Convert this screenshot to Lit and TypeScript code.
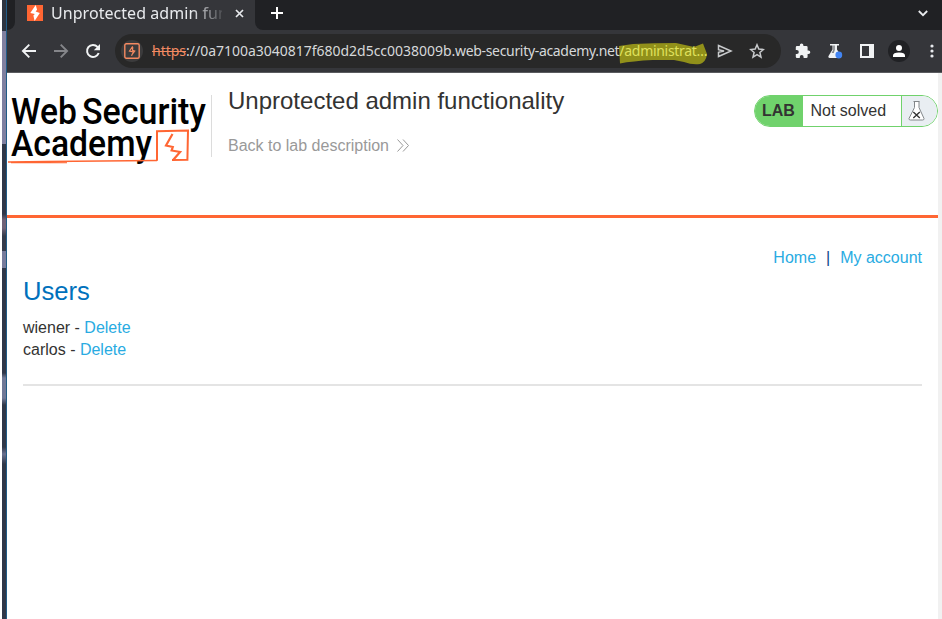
import { LitElement, html, css } from "lit";
import { customElement } from "lit/decorators.js";

@customElement("browser-chrome")
class BrowserChrome extends LitElement {
  static styles = css`
    :host { display: block; font-family: "Noto Sans", sans-serif; color: #e8eaed; }
    svg { display: block; flex: none; }
    .tabs { display: flex; height: 30px; background: #202124; }
    .gap { width: 8px; background: #35363a; }
    .gap i { display: block; height: 30px; background: #202124; border-bottom-right-radius: 8px; }
    .tab { box-sizing: border-box; width: 240px; height: 30px; background: #35363a; display: flex; align-items: flex-start; padding: 5px 0 0 12px; }
    .title { width: 171px; margin: -4px 0 0 8px; overflow: hidden; white-space: nowrap; font-size: 16px; line-height: 24px; letter-spacing: 0.05px;
      -webkit-mask-image: linear-gradient(90deg, #000 140px, transparent 176px); mask-image: linear-gradient(90deg, #000 140px, transparent 176px); }
    .close { margin: 4px 0 0 12.500px; }
    .rest { flex: 1; background: #35363a; }
    .rest div { height: 30px; box-sizing: border-box; background: #202124; border-bottom-left-radius: 8px; display: flex; justify-content: space-between; padding: 7px 14px 0 16px; }
    .caret { margin-top: 3px; }
    .bar { display: flex; align-items: center; box-sizing: border-box; height: 42px; padding-left: 14px; background: #35363a; }
    .nav { display: flex; gap: 16px; width: 94px; }
    .pill { display: flex; flex: none; align-items: center; box-sizing: border-box; width: 666px; height: 34px; border-radius: 17px; background: #282828; padding-left: 6px; }
    .site { flex: none; width: 22px; height: 22px; border-radius: 50%; background: #3b3b3c; display: flex; align-items: center; justify-content: center; }
    .url { position: relative; flex: none; width: 556px; margin-left: 9px; font-size: 14px; line-height: 24px; white-space: nowrap; color: #d6d8da; }
    .url .text { position: relative; display: block; }
    .url s { color: #f28b62; text-decoration-thickness: 1px; }
    .url .id { letter-spacing: -0.02px; }
    .url .host { letter-spacing: -0.32px; }
    .url .path { letter-spacing: -0.3px; color: #dfe05c; }
    .mark { position: absolute; left: 466px; top: 3px; }
    .send { margin-left: 9px; }
    .star { margin-left: 16px; }
    .tools { display: flex; align-items: center; margin-left: 14px; }
    .tools .item { margin-left: 16px; }
    .tools .panel { margin-left: 17px; }
    .avatar { width: 22px; height: 22px; border-radius: 50%; background: #202124; margin-left: 14px; display: flex; align-items: center; justify-content: center; }
    .dots { margin-left: 19.500px; }
    .line { height: 1px; background: #5a5b5f; }
  `;

  render() {
    return html`
      <div class="tabs">
        <div class="gap"><i></i></div>
        <div class="tab">
          <svg width="16" height="16" viewBox="0 0 16 16"><rect width="16" height="16" fill="#ff6633"/><path d="M8.7 0 3.3 8l4.5 1.1-1.4 1.3L7.6 16l5.2-8-4.2-1.6 1.5-1.6z" fill="#fff"/></svg>
          <span class="title">Unprotected admin functionality</span>
          <svg class="close" width="9" height="9" viewBox="0 0 9 9"><path d="M1 1l7 7M8 1 1 8" stroke="#e8eaed" stroke-width="1.7"/></svg>
        </div>
        <div class="rest"><div>
          <svg width="12" height="12" viewBox="0 0 12 12"><path d="M6 0v12M0 6h12" stroke="#fff" stroke-width="2"/></svg>
          <svg class="caret" width="10" height="7" viewBox="0 0 10 7"><path d="M.8 1 5 5.2 9.2 1" fill="none" stroke="#e8eaed" stroke-width="1.8"/></svg>
        </div></div>
      </div>
      <div class="bar">
        <div class="nav">
          <svg width="16" height="16" viewBox="0 0 16 16"><path d="M15 8H2.5M8.3 1.6 1.9 8l6.4 6.4" fill="none" stroke="#f1f3f4" stroke-width="1.9"/></svg>
          <svg width="16" height="16" viewBox="0 0 16 16"><path d="M1 8h12.5M7.700 1.600 14.100 8l-6.400 6.400" fill="none" stroke="#85868a" stroke-width="1.9"/></svg>
          <svg width="16" height="16" viewBox="0 0 16 16"><path d="M13.700 10A6 6 0 1 1 12.500 3.900L14 5.400" fill="none" stroke="#f1f3f4" stroke-width="2"/><path d="M15 1v6.200H8.800z" fill="#f1f3f4"/></svg>
        </div>
        <div class="pill">
          <div class="site"><svg width="16" height="16" viewBox="0 0 16 16"><rect x=".8" y=".8" width="14.400" height="14.400" rx="1.500" fill="none" stroke="#f58a61" stroke-width="1.4"/><path d="M8.700 3.300 5.500 8l4 .9-2 3.800M8.800 4.100l-.3 3.300 2.200.6-2.800 3.600" fill="none" stroke="#f58a61" stroke-width="1.2"/></svg></div>
          <div class="url">
            <svg class="mark" width="90" height="23" viewBox="0 0 90 23"><path d="M1 4 15 2Q36 1 58 1L76 5 85 1.500 89 12Q88 20 82 22Q74 23 66 20L56 18 35 18Q14 19 2 21.500z" fill="#91901a"/></svg>
            <span class="text"><s>https</s><span class="id">://0a7100a3040817f680d2d5cc0038009b</span><span class="host">.web-security-academy.net</span><span class="path">/administrat…</span></span>
          </div>
          <svg class="send" width="16" height="14" viewBox="0 0 16 14"><path d="M1.500 1.500 14 7 1.500 12.500V8.300L7 7 1.500 5.700z" fill="none" stroke="#c8cacc" stroke-width="1.5"/></svg>
          <svg class="star" width="16" height="16" viewBox="0 0 16 16"><path d="m8 1.800 1.800 4.300 4.600.4-3.500 3 1.100 4.600L8 11.700l-4 2.400 1.100-4.600-3.500-3 4.600-.4z" fill="none" stroke="#c8cacc" stroke-width="1.5"/></svg>
        </div>
        <div class="tools">
          <svg width="16" height="16" viewBox="0 0 16 16"><path d="M13.500 7.400h-.9V4.300q0-1.200-1.300-1.200H8.400v-.9a1.800 1.800 0 0 0-3.600 0v.9H2Q.8 3.100.8 4.300v2.600h1a2 2 0 0 1 0 4h-1v2.900Q.8 15 2 15h2.800v-1a1.900 1.900 0 0 1 3.800 0v1h2.700q1.300 0 1.300-1.200V11h.9a1.800 1.800 0 0 0 0-3.600z" fill="#f1f3f4"/></svg>
          <svg class="item" width="16" height="16" viewBox="0 0 16 16"><path d="M3 1h9v1.500h-2v4L14 13q.6 1.700-1 2H2.500Q.6 14.700 1.500 13l4-6.500v-4H3z" fill="#f1f3f4"/><path d="M6.200 2.500v4.600L4.600 10H6.800l1-3V2.500z" fill="#85888c"/><circle cx="11.800" cy="12" r="3.400" fill="#4285f4"/></svg>
          <svg class="panel" width="14" height="14" viewBox="0 0 14 14"><path d="M0 0h14v14H0zM2 2v10h7V2z" fill="#f1f3f4" fill-rule="evenodd"/></svg>
          <div class="avatar"><svg width="12" height="12" viewBox="0 0 12 12"><circle cx="6" cy="3" r="3" fill="#fff"/><path d="M0 12v-1.500Q0 7.500 6 7.500t6 3V12z" fill="#fff"/></svg></div>
          <svg class="dots" width="4" height="14" viewBox="0 0 4 14"><g fill="#e8eaed"><circle cx="2" cy="2" r="1.600"/><circle cx="2" cy="7" r="1.600"/><circle cx="2" cy="12" r="1.600"/></g></svg>
        </div>
      </div>
      <div class="line"></div>
    `;
  }
}

@customElement("lab-page")
class LabPage extends LitElement {
  static styles = css`
    :host { display: flex; flex: 1; min-height: 0; font: 16px/22px "Liberation Sans", Arial, sans-serif; color: #333332; background: #fff; }
    svg { display: block; flex: none; }
    .page { width: 931px; }
    .scroll { flex: 1; background: #f1f1f1; }
    header { display: flex; align-items: flex-start; box-sizing: border-box; height: 145px; border-bottom: 3px solid #ff6633; }
    .logo { width: 204px; height: 110px; overflow: visible; }
    .head { flex: 1; border-left: 1px solid #dcdcdc; margin-top: 22px; height: 62px; padding-left: 16px; }
    h2 { font-size: 24px; line-height: 28px; font-weight: 400; margin: -8px 0 0; }
    .back { display: flex; align-items: center; gap: 8.500px; margin-top: 20px; color: #999; }
    .back svg { margin-top: -2px; }
    .status { display: flex; box-sizing: border-box; height: 32px; width: 184px; margin-top: 22px; border: 1px solid #70d26c; border-radius: 16px; overflow: hidden; line-height: 30px; }
    .lab { width: 48px; box-sizing: border-box; padding-left: 7px; font-weight: 700; background: #70d26c; }
    .state { flex: 1; padding-left: 7.500px; }
    .flask { width: 36px; box-sizing: border-box; border-left: 1px solid #70d26c; background: #e9eef2; padding: 4px 0 0 5.500px; }
    a { color: #29abe2; }
    main { padding: 29px 16px 0; }
    nav { display: flex; justify-content: flex-end; gap: 10px; color: #0b4a87; }
    h1 { font-size: 25.600px; line-height: 30px; font-weight: 400; color: #0071bc; margin: 7px 0 11px; }
    .divider { height: 2px; margin-top: 23px; background: #e4e4e4; }
  `;

  render() {
    return html`
      <div class="page">
        <header>
          <svg class="logo" viewBox="0 0 204 110">
            <g font-family="Roboto, sans-serif" font-weight="500" fill="#000">
              <text x="4" y="50.500" font-size="37.500" textLength="66" lengthAdjust="spacingAndGlyphs">Web</text>
              <text x="75" y="50.500" font-size="37.500" textLength="124" lengthAdjust="spacingAndGlyphs">Security</text>
              <text x="4" y="83" font-size="36" textLength="141" lengthAdjust="spacingAndGlyphs">Academy</text>
            </g>
            <g fill="none" stroke="#ff6633">
              <path d="M1 89 40 88.500 150 87.500M4 89.500 60 89.500" stroke-width="1.600"/>
              <path d="M150 87.800V58.300L181 57.500l-.6 29.300-15.400.2" stroke-width="2"/>
              <path d="m165.500 61-6.500 11.500 6.800 1.500-1.200 3.500 8.500 1.500-7 8" stroke-width="2.200"/>
            </g>
          </svg>
          <div class="head">
            <h2>Unprotected admin functionality</h2>
            <div class="back"><span>Back to lab description</span><svg width="12" height="13" viewBox="0 0 12 13"><path d="M.5.500 6 6.500.500 12.500M6 .500l5.500 6-5.500 6" fill="none" stroke="#999"/></svg></div>
          </div>
          <div class="status">
            <div class="lab">LAB</div><div class="state">Not solved</div>
            <div class="flask"><svg width="17" height="21" viewBox="0 0 17 21"><path d="M5.500 1.500h6M6.500 1.500v6L1 18.500q-.3 1.500 1.500 1.500h12q1.800 0 1.500-1.500L11 7.500v-6" fill="#fff" stroke="#83878a"/><path d="M5.300 12l6.500 6m0-6-6.500 6" stroke="#333" stroke-width="1.400"/></svg></div>
          </div>
        </header>
        <main>
          <nav><a>Home</a><span>|</span><a>My account</a></nav>
          <h1>Users</h1>
          <div>wiener - <a>Delete</a></div>
          <div>carlos - <a>Delete</a></div>
          <div class="divider"></div>
        </main>
      </div>
      <div class="scroll"></div>
    `;
  }
}

@customElement("app-root")
class AppRoot extends LitElement {
  static styles = css`
    :host { display: flex; width: 942px; height: 619px; overflow: hidden; background: #fff; }
    .edge { flex: none; width: 4.500px; margin-left: 1.500px; background: linear-gradient(#2d3440 0 31px, #8080a0 31px 144px, #303748 144px 214px, #706276 220px 228px, #353b4b 236px 251px, #777b9b 251px 268px, #303748 268px 373px, #707896 378px 398px, #303748 405px 447px, #69708f 454px, #303748 464px); }
    .frame { flex: none; width: 1px; background: #215c87; }
    .window { flex: 1; display: flex; flex-direction: column; min-width: 0; }
  `;

  render() {
    return html`<div class="edge"></div><div class="frame"></div>
      <div class="window"><browser-chrome></browser-chrome><lab-page></lab-page></div>`;
  }
}
